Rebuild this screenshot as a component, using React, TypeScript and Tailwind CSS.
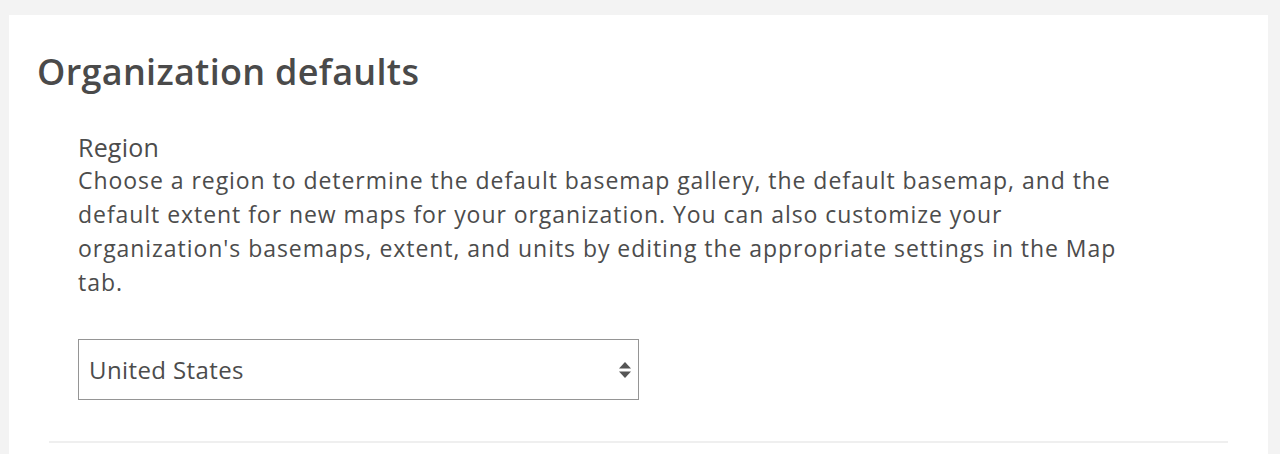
import React from "react";

export default function App() {
  return (
    <div
      className="w-[1280px] h-[454px] overflow-hidden bg-[#f3f3f3] pt-[15px] pl-[9px] pr-[12px]"
      style={{ fontFamily: '"Open Sans", "Liberation Sans", sans-serif' }}
    >
      <div className="bg-white h-[439px] pt-[35px]">
        <h2 className="pl-[28px] text-[36px] leading-[44px] font-semibold tracking-[0.3px] text-[#4a4a4a]">
          Organization defaults
        </h2>
        <div className="mx-[40px] mt-[37px] border-b-2 border-[#efefef] pb-[41px]">
          <div className="pl-[29px] text-[#4c4c4c]">
            <div className="text-[25px] leading-[32px] font-medium tracking-[0.2px]">Region</div>
            <p className="text-[23px] leading-[34px] tracking-[0.95px] whitespace-nowrap">
              Choose a region to determine the default basemap gallery, the default basemap, and the
              <br />
              default extent for new maps for your organization. You can also customize your
              <br />
              organization's basemaps, extent, and units by editing the appropriate settings in the Map
              <br />
              tab.
            </p>
            <div className="mt-[40px] w-[561px] h-[61px] border border-[#959595] flex items-center justify-between pl-[10px] pr-[6px]">
              <span className="text-[24px] tracking-[0.4px] text-[#4c4c4c]">United States</span>
              <svg width="14" height="18" viewBox="0 0 14 18">
                <path d="M7 1 L13 7.5 L1 7.5 Z" fill="#555" />
                <path d="M1 10.5 L13 10.5 L7 17 Z" fill="#555" />
              </svg>
            </div>
          </div>
        </div>
      </div>
    </div>
  );
}
